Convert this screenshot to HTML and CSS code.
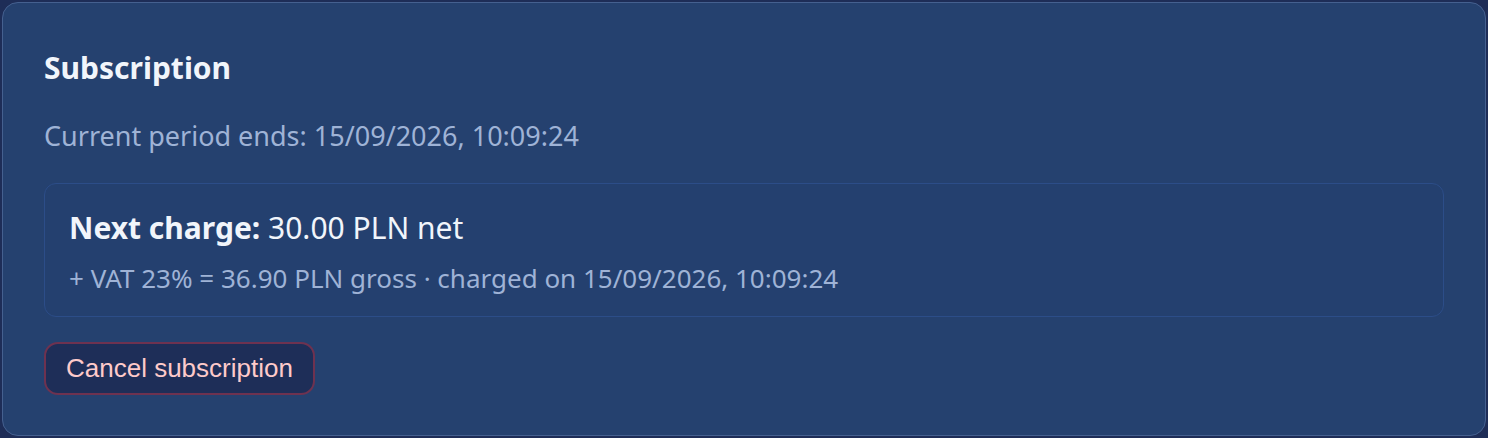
FILE: index.html
```html
<!DOCTYPE html>
<html lang="en">
<head>
<meta charset="utf-8">
<title>Subscription</title>
<link rel="stylesheet" href="styles.css">
</head>
<body>
  <section class="card">
    <h2 class="title">Subscription</h2>
    <p class="period">Current period ends: 15/09/2026, 10:09:24</p>
    <div class="charge">
      <div class="charge-main"><strong>Next charge:</strong> 30.00 PLN net</div>
      <div class="charge-sub">+ VAT 23% = 36.90 PLN gross · charged on 15/09/2026, 10:09:24</div>
    </div>
    <button class="cancel" type="button">Cancel subscription</button>
  </section>
</body>
</html>
```

FILE: styles.css
```css
html, body {
  margin: 0;
  padding: 0;
  background: #1e2d57;
}
body {
  padding: 2px;
  box-sizing: border-box;
  height: 438px;
  font-family: "Noto Sans", "Open Sans", sans-serif;
}
.card {
  box-sizing: border-box;
  height: 434px;
  background: #25416f;
  border: 1px solid #45608f;
  border-radius: 16px;
  padding: 45px 41px 0 41px;
  display: flex;
  flex-direction: column;
  align-items: flex-start;
}
.title {
  margin: 0;
  font-size: 30px;
  line-height: 40px;
  font-weight: 700;
  color: #f1f5fb;
}
.period {
  margin: 30px 0 0 0;
  font-size: 27px;
  line-height: 36px;
  color: #9fb3d6;
}
.charge {
  box-sizing: border-box;
  align-self: stretch;
  margin-top: 29px;
  border: 1px solid #2c4d88;
  background: #24406f;
  border-radius: 12px;
  padding: 24px 24px 21px 24px;
}
.charge-main {
  font-size: 30px;
  line-height: 40px;
  color: #f1f5fb;
}
.charge-main strong {
  font-weight: 700;
}
.charge-sub {
  margin-top: 13px;
  font-size: 26px;
  line-height: 34px;
  color: #9fb3d6;
}
.cancel {
  margin-top: 25px;
  height: 53px;
  padding: 0 20px;
  border: 2px solid #6e3250;
  border-radius: 14px;
  background: #1e2e58;
  color: #fecaca;
  font-family: "Liberation Sans", Arial, sans-serif;
  font-size: 26px;
}
```
